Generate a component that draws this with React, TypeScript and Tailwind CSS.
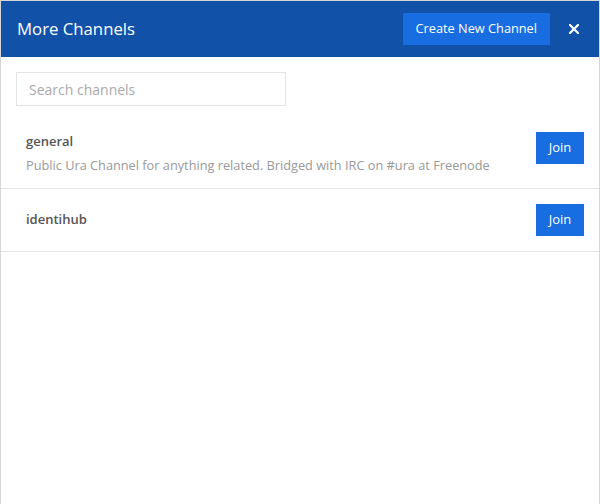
import React from 'react';

const channels = [
  {
    name: 'general',
    description: 'Public Ura Channel for anything related. Bridged with IRC on #ura at Freenode',
  },
  { name: 'identihub', description: '' },
];

export default function App() {
  return (
    <div
      className="w-[600px] h-[504px] bg-white border border-[#d6d6d6] border-b-0 flex flex-col"
      style={{ fontFamily: '"Open Sans", sans-serif' }}
    >
      <div className="h-[56px] bg-[#1152a8] flex items-center pl-[16px] pr-[20px]">
        <h1 className="text-[16.75px] text-white flex-1">More Channels</h1>
        <button className="h-[32px] px-[13px] bg-[#186de0] text-white text-[12.75px]">
          Create New Channel
        </button>
        <button className="ml-[19px] text-white">
          <svg width="10" height="10" viewBox="0 0 10 10" className="block">
            <path d="M1 1L9 9M9 1L1 9" stroke="white" strokeWidth="2.2" strokeLinecap="square" />
          </svg>
        </button>
      </div>
      <div className="px-[15px] pt-[15px] pb-[13px]">
        <input
          placeholder="Search channels"
          className="w-[270px] h-[34px] border border-[#e3e3e3] px-[12px] text-[14px] placeholder:text-[#aaa] outline-none"
        />
      </div>
      {channels.map((c) => (
        <div
          key={c.name}
          className={`flex border-b border-[#e6e6e6] pl-[25px] pr-[15px] ${c.description ? 'h-[70px] items-start pt-[13px]' : 'h-[63px] items-center'}`}
        >
          <div className="flex-1">
            <div className="text-[13px] font-semibold text-[#555]">{c.name}</div>
            {c.description && (
              <div className="text-[12.75px] text-[#999] mt-[4px]">{c.description}</div>
            )}
          </div>
          <button className="w-[48px] h-[32px] bg-[#186de0] text-white text-[13px]">Join</button>
        </div>
      ))}
    </div>
  );
}
